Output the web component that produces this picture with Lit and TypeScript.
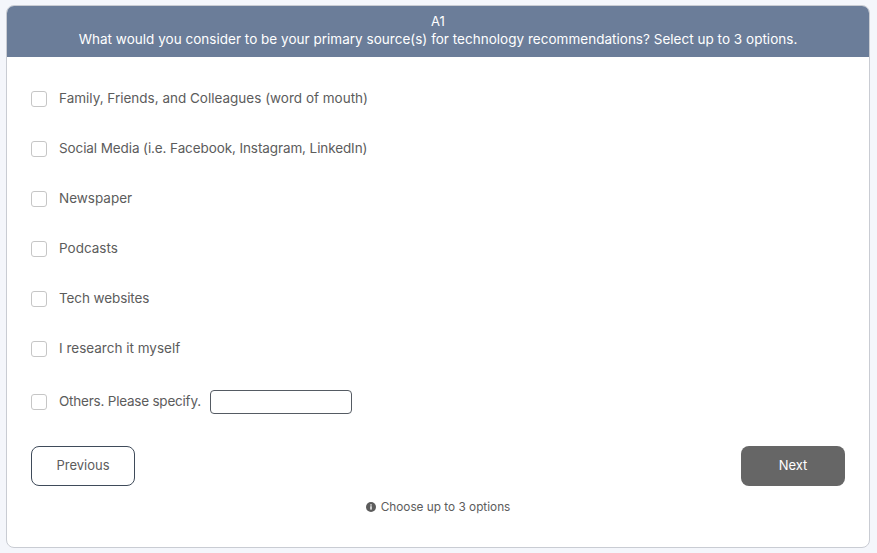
import { LitElement, html, css } from 'lit';
import { customElement } from 'lit/decorators.js';

const OPTIONS = [
  { label: 'Family, Friends, and Colleagues (word of mouth)' },
  { label: 'Social Media (i.e. Facebook, Instagram, LinkedIn)', tight: true },
  { label: 'Newspaper' },
  { label: 'Podcasts' },
  { label: 'Tech websites', tight: true },
  { label: 'I research it myself' },
];

@customElement('app-root')
export class AppRoot extends LitElement {
  static styles = css`
    :host {
      display: block;
      box-sizing: border-box;
      height: 553px;
      padding: 5px 7px 5px 6px;
      background: #f4f6fb;
      font-family: Inter, 'Liberation Sans', sans-serif;
      font-size: 13.5px;
      color: #5c5c5c;
    }
    .card {
      box-sizing: border-box;
      height: 543px;
      background: #fff;
      border: 1px solid #c9ccd3;
      border-radius: 8px;
      overflow: hidden;
    }
    .header {
      height: 52px;
      margin: -1px -1px 0;
      box-sizing: border-box;
      padding-top: 7px;
      background: #6b7d99;
      color: #fff;
      text-align: center;
      line-height: 18px;
      letter-spacing: 0.02px;
    }
    .a1 {
      font-size: 13px;
    }
    .body {
      padding: 17px 24px 0;
    }
    .option {
      display: flex;
      align-items: center;
      height: 50px;
      gap: 12px;
    }
    .other {
      height: 56px;
    }
    .label {
      padding-bottom: 2px;
    }
    .tight {
      letter-spacing: -0.1px;
    }
    .tighter {
      letter-spacing: -0.22px;
    }
    .box {
      box-sizing: border-box;
      width: 16px;
      height: 16px;
      border: 1px solid #c6c6c6;
      border-radius: 3px;
      background: #fff;
    }
    .specify {
      box-sizing: border-box;
      width: 142px;
      height: 24px;
      margin-left: -3px;
      border: 1px solid #555b63;
      border-radius: 4px;
      background: #fff;
    }
    .actions {
      display: flex;
      justify-content: space-between;
      margin-top: 16px;
    }
    .btn {
      box-sizing: border-box;
      width: 104px;
      height: 40px;
      border-radius: 8px;
      font: inherit;
      font-size: 13px;
      padding: 0 0 2px;
    }
    .prev {
      background: #fff;
      border: 1px solid #3f4b5a;
      color: #5c5c5c;
    }
    .next {
      background: #666;
      border: none;
      color: #fff;
    }
    .hint {
      display: flex;
      align-items: center;
      justify-content: center;
      gap: 5px;
      margin-top: 13px;
      font-size: 11.8px;
      line-height: 16px;
    }
    .hint svg {
      display: block;
    }
  `;

  render() {
    return html`
      <div class="card">
        <div class="header">
          <div class="a1">A1</div>
          <div>What would you consider to be your primary source(s) for technology recommendations? Select up to 3 options.</div>
        </div>
        <div class="body">
          ${OPTIONS.map(
            (o) => html`<div class="option">
              <span class="box"></span>
              <span class="label ${o.tight ? 'tight' : ''}">${o.label}</span>
            </div>`
          )}
          <div class="option other">
            <span class="box"></span>
            <span class="label tighter">Others. Please specify.</span>
            <input class="specify" type="text" />
          </div>
          <div class="actions">
            <button class="btn prev">Previous</button>
            <button class="btn next">Next</button>
          </div>
          <div class="hint">
            <svg width="10" height="10" viewBox="0 0 10 10">
              <circle cx="5" cy="5" r="5" fill="#5c5c5c"></circle>
              <rect x="4.3" y="4.2" width="1.4" height="3.4" fill="#fff"></rect>
              <rect x="4.3" y="2.3" width="1.4" height="1.3" fill="#fff"></rect>
            </svg>
            <span>Choose up to 3 options</span>
          </div>
        </div>
      </div>
    `;
  }
}
